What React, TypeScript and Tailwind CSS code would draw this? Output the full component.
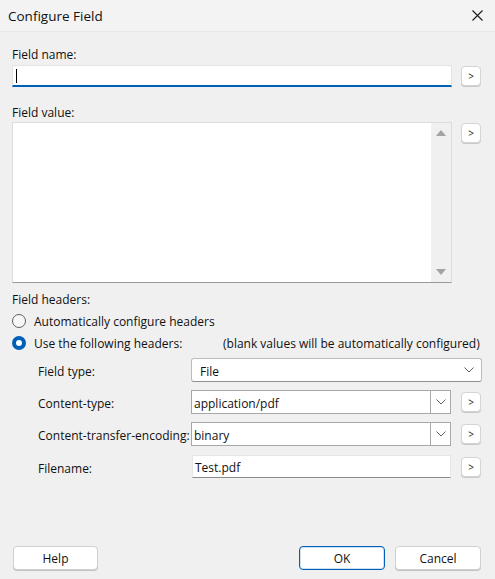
import React from "react";

// Small ">" button that sits to the right of a field.
function ArrowButton({ className = "" }: { className?: string }) {
  return (
    <button className={`flex h-[20px] w-[20px] shrink-0 items-center justify-center rounded-[4px] border border-[#d4d4d4] bg-white text-[10px] leading-none text-[#1a1a1a] shadow-[0_1px_0_#c8c8c8] ${className}`}>
      &gt;
    </button>
  );
}

// Thin down chevron used by the drop-down lists.
function Chevron() {
  return (
    <svg width="10" height="6" viewBox="0 0 10 6" fill="none" stroke="#606060" strokeWidth="1">
      <path d="M0.5 0.5 L5 5 L9.5 0.5" />
    </svg>
  );
}

function Radio({ checked }: { checked: boolean }) {
  return checked ? (
    <span className="flex h-[14px] w-[14px] shrink-0 items-center justify-center rounded-full bg-[#005fb8]">
      <span className="h-[6px] w-[6px] rounded-full bg-white" />
    </span>
  ) : (
    <span className="h-[14px] w-[14px] shrink-0 rounded-full border border-[#5f5f5f] bg-[#f7f7f7]" />
  );
}

function DialogButton({ label, primary = false, width = "w-[86px]" }: { label: string; primary?: boolean; width?: string }) {
  return (
    <button
      className={`h-[24px] ${width} rounded-[4px] bg-white pt-[2px] text-[12px] text-[#111] ${
        primary ? "border border-[#005fb8] shadow-[inset_0_0_0_1px_#cfe0f1]" : "border border-[#d0d0d0] shadow-[0_1px_0_#c4c4c4]"
      }`}
    >
      {label}
    </button>
  );
}

export default function App() {
  return (
    <div className="flex h-[579px] w-[495px] flex-col bg-[#f0f0f0] font-['Segoe_UI','Open_Sans',sans-serif] text-[12px] text-[#111]">
      {/* Title bar */}
      <div className="flex h-[32px] shrink-0 items-center justify-between border-b border-[#e8e8e8] bg-[#f3f3f3] pl-[8px] pr-[12px]">
        <span className="pt-[2px] text-[13.5px] leading-none">Configure Field</span>
        <svg width="11" height="11" viewBox="0 0 11 11" stroke="#1a1a1a" strokeWidth="1.1">
          <path d="M0.5 0.5 L10.5 10.5 M10.5 0.5 L0.5 10.5" />
        </svg>
      </div>

      <div className="flex flex-1 flex-col px-[12px] pt-[12px]">
        {/* Field name */}
        <div className="h-[16px] leading-[22px]">Field name:</div>
        <div className="mt-[5px] flex items-start gap-[9px]">
          <div className="flex h-[22px] w-[440px] items-center border border-b-2 border-[#e3e3e3] border-b-[#005fb8] bg-white pl-[3px]">
            <span className="h-[14px] w-px bg-black" />
          </div>
          <ArrowButton className="mt-[1px]" />
        </div>

        {/* Field value */}
        <div className="mt-[15px] h-[16px] leading-[22px]">Field value:</div>
        <div className="mt-[4px] flex items-start gap-[9px]">
          <div className="flex h-[161px] w-[440px] justify-end border border-[#dcdcdc] border-b-[#9a9a9a] bg-white">
            <div className="flex w-[20px] flex-col items-center justify-between bg-[#f0f0f0] py-[7px]">
              <svg width="10" height="6" viewBox="0 0 10 6">
                <path d="M0 6 L5 0 L10 6 Z" fill="#a3a3a3" />
              </svg>
              <svg width="10" height="6" viewBox="0 0 10 6">
                <path d="M0 0 L5 6 L10 0 Z" fill="#a3a3a3" />
              </svg>
            </div>
          </div>
          <ArrowButton className="mt-[1px]" />
        </div>

        {/* Field headers */}
        <div className="mt-[7px] h-[16px] leading-[20px]">Field headers:</div>
        <div className="mt-[4px] flex h-[22px] items-center gap-[8px]">
          <Radio checked={false} />
          <span className="pt-[2px]">Automatically configure headers</span>
        </div>
        <div className="flex h-[22px] items-center">
          <div className="flex w-[211px] items-center gap-[8px]">
            <Radio checked />
            <span className="pt-[2px]">Use the following headers:</span>
          </div>
          <span className="pt-[2px]">(blank values will be automatically configured)</span>
        </div>

        {/* Header grid */}
        <div className="mt-[4px] flex flex-col gap-[8px] pl-[26px]">
          <div className="flex h-[24px] items-center">
            <span className="w-[153px] pt-[4px]">Field type:</span>
            <div className="flex h-[24px] w-[291px] items-center justify-between rounded-[3px] border border-[#bcbcbc] border-b-[#8f8f8f] bg-white pl-[8px] pr-[7px]">
              <span className="pt-[4px]">File</span>
              <Chevron />
            </div>
          </div>

          <div className="flex h-[24px] items-center">
            <span className="w-[153px] pt-[4px]">Content-type:</span>
            <div className="flex h-[24px] w-[260px] items-center border border-[#a8a8a8] bg-white">
              <span className="flex-1 pl-[2px] pt-[4px]">application/pdf</span>
              <div className="flex h-full w-[20px] items-center justify-center border-l border-[#a8a8a8]">
                <Chevron />
              </div>
            </div>
            <ArrowButton className="ml-[10px]" />
          </div>

          <div className="flex h-[24px] items-center">
            <span className="w-[153px] pt-[4px]">Content-transfer-encoding:</span>
            <div className="flex h-[24px] w-[260px] items-center border border-[#a8a8a8] bg-white">
              <span className="flex-1 pl-[2px] pt-[4px]">binary</span>
              <div className="flex h-full w-[20px] items-center justify-center border-l border-[#a8a8a8]">
                <Chevron />
              </div>
            </div>
            <ArrowButton className="ml-[10px]" />
          </div>

          <div className="mt-[1px] flex h-[23px] items-center">
            <span className="w-[154px] pt-[4px]">Filename:</span>
            <div className="flex h-[23px] w-[259px] items-center border border-[#e6e6e6] border-b-[#8c8c8c] bg-white pl-[2px] pt-[3px]">
              Test.pdf
            </div>
            <ArrowButton className="ml-[10px]" />
          </div>
        </div>

        {/* Dialog buttons */}
        <div className="mt-auto mb-[9px] mr-[2px] flex items-center pl-[1px]">
          <DialogButton label="Help" width="w-[85px]" />
          <div className="flex-1" />
          <div className="flex gap-[10px]">
            <DialogButton label="OK" primary />
            <DialogButton label="Cancel" />
          </div>
        </div>
      </div>
    </div>
  );
}
